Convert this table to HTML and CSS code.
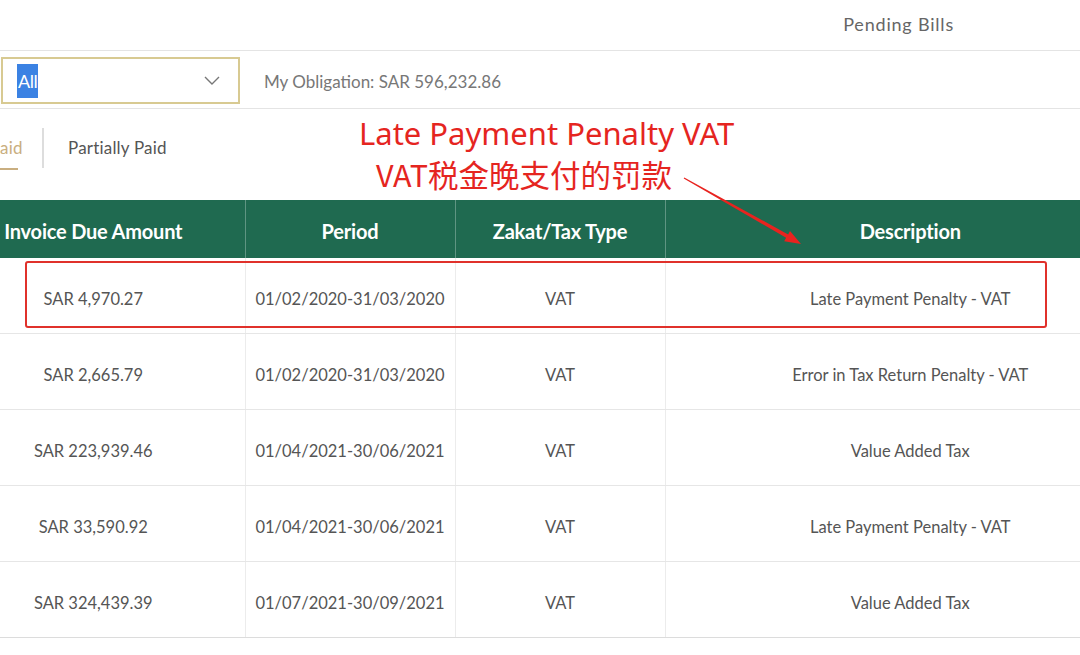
FILE: index.html
```html
<!DOCTYPE html>
<html lang="en">
<head>
<meta charset="utf-8">
<title>Pending Bills</title>
<link rel="stylesheet" href="styles.css">
</head>
<body>
<div class="page">
  <header class="topbar">
    <span class="title">Pending Bills</span>
  </header>

  <div class="filter-row">
    <div class="select">
      <span class="sel-text">All</span>
      <svg class="chevron" width="16" height="9" viewBox="0 0 16 9"><path d="M1 1 L8 8 L15 1" fill="none" stroke="#777" stroke-width="1.4"/></svg>
    </div>
    <span class="obligation">My Obligation: SAR 596,232.86</span>
  </div>

  <div class="tabs">
    <span class="tab active">aid</span>
    <span class="tab-sep"></span>
    <span class="tab">Partially Paid</span>
  </div>

  <div class="table-wrap">
    <table class="bills">
      <colgroup>
        <col class="c1"><col class="c2"><col class="c3"><col class="c4">
      </colgroup>
      <thead>
        <tr>
          <th>Invoice Due Amount</th>
          <th>Period</th>
          <th>Zakat/Tax Type</th>
          <th>Description</th>
        </tr>
      </thead>
      <tbody>
        <tr><td>SAR 4,970.27</td><td>01/02/2020-31/03/2020</td><td>VAT</td><td>Late Payment Penalty - VAT</td></tr>
        <tr><td>SAR 2,665.79</td><td>01/02/2020-31/03/2020</td><td>VAT</td><td>Error in Tax Return Penalty - VAT</td></tr>
        <tr><td>SAR 223,939.46</td><td>01/04/2021-30/06/2021</td><td>VAT</td><td>Value Added Tax</td></tr>
        <tr><td>SAR 33,590.92</td><td>01/04/2021-30/06/2021</td><td>VAT</td><td>Late Payment Penalty - VAT</td></tr>
        <tr><td>SAR 324,439.39</td><td>01/07/2021-30/09/2021</td><td>VAT</td><td>Value Added Tax</td></tr>
      </tbody>
    </table>
  </div>

  <div class="note">
    <div class="note-line1">Late Payment Penalty VAT</div>
    <div class="note-line2">VAT税金晚支付的罚款</div>
  </div>
  <div class="highlight-box"></div>
  <svg class="arrow" width="1080" height="655" viewBox="0 0 1080 655">
    <polygon points="684.3,177.6 788.1,234.4 790.0,230.9 801,244 784.2,241.3 786.1,237.8 683.7,178.4" fill="#e8231f"/>
  </svg>
</div>
</body>
</html>
```

FILE: styles.css
```css
html, body {
  margin: 0;
  padding: 0;
  background: #ffffff;
}
body {
  width: 1080px;
  height: 655px;
  overflow: hidden;
  font-family: Lato, "Noto Sans", sans-serif;
  color: #555555;
}
.page {
  position: relative;
  width: 1080px;
  height: 655px;
}

/* top bar */
.topbar {
  height: 50px;
  border-bottom: 1px solid #e4e4e4;
  display: flex;
  align-items: center;
  justify-content: flex-end;
  padding-right: 126px;
  box-sizing: content-box;
}
.title {
  font-size: 18px;
  color: #666666;
  letter-spacing: 0.8px;
  margin-top: -2px;
}

/* filter row */
.filter-row {
  height: 57px;
  border-bottom: 1px solid #e4e4e4;
  display: flex;
  align-items: center;
  gap: 24px;
}
.select {
  margin-left: 1px;
  margin-top: 2px;
  width: 239px;
  height: 47px;
  box-sizing: border-box;
  border: 2px solid #d8ca92;
  display: flex;
  align-items: center;
  justify-content: space-between;
  padding: 0 18px 0 14px;
}
.sel-text {
  background: #3b82e3;
  color: #ffffff;
  font-size: 18px;
  height: 34px;
  line-height: 34px;
  padding: 0 1px;
  letter-spacing: -0.5px;
}
.obligation {
  font-size: 17px;
  color: #777777;
  margin-top: 3px;
}

/* tabs */
.tabs {
  display: flex;
  align-items: center;
  padding: 19px 0 30px 0;
  height: 42px;
}
.tab {
  font-size: 17px;
  letter-spacing: 0.2px;
  color: #555555;
  height: 42px;
  line-height: 40px;
  box-sizing: border-box;
}
.tab.active {
  color: #c9ae80;
  border-bottom: 2px solid #c9ae80;
  width: 18px;
}
.tab-sep {
  width: 2px;
  height: 40px;
  background: #dddddd;
  margin: 0 24px 2px 24px;
}

/* table */
.table-wrap {
  margin-left: -58px;
  width: 1213px;
}
.bills {
  border-collapse: collapse;
  table-layout: fixed;
  width: 1213px;
}
.c1 { width: 303px; }
.c2 { width: 210px; }
.c3 { width: 210px; }
.c4 { width: 490px; }
.bills th {
  background: #1f6a50;
  color: #ffffff;
  font-weight: 700;
  font-size: 20px;
  height: 54px;
  padding: 4px 0 0 0;
  text-align: center;
  border-left: 1px solid #5f9582;
  letter-spacing: -0.2px;
}
.bills th:first-child { border-left: none; }
.bills td {
  height: 68px;
  padding: 7px 0 0 0;
  text-align: center;
  font-size: 16.5px;
  color: #555555;
  border-bottom: 1px solid #e6e6e6;
  border-left: 1px solid #ececec;
}
.bills td:first-child { border-left: none; }
.bills tbody tr:last-child td { border-bottom: 1px solid #dcdcdc; }

/* annotations */
.note {
  position: absolute;
  left: 359px;
  top: 113px;
  color: #e5251f;
  font-family: "Noto Sans", "Noto Sans CJK SC", sans-serif;
  font-size: 31px;
  line-height: 41px;
}
.note-line2 {
  padding-left: 17px;
  font-family: "Noto Sans CJK SC", sans-serif;
  font-size: 30.5px;
}
.highlight-box {
  position: absolute;
  left: 25px;
  top: 261px;
  width: 1022px;
  height: 67px;
  box-sizing: border-box;
  border: 2px solid #e0312b;
  border-radius: 3px;
}
.arrow {
  position: absolute;
  left: 0;
  top: 0;
  pointer-events: none;
}
```
